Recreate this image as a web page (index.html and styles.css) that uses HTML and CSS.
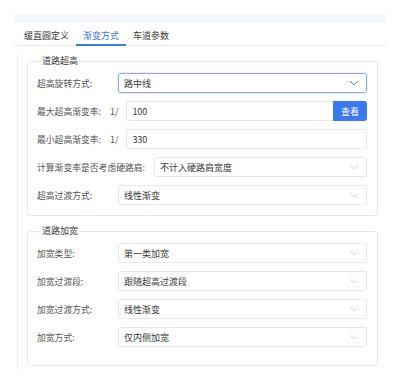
FILE: index.html
```html
<!DOCTYPE html>
<html lang="zh-CN">
<head>
    <meta charset="UTF-8">
    <title>渐变方式</title>
    <link rel="stylesheet" href="styles.css">
</head>
<body>
    <div class="page">
        <div class="topbar"></div>

        <!-- Tabs -->
        <div class="tabs">
            <div class="tab">缓直圆定义</div>
            <div class="tab active">渐变方式</div>
            <div class="tab">车道参数</div>
        </div>

        <div class="panel">
            <!-- 道路超高 -->
            <fieldset class="group">
                <legend>道路超高</legend>
                <div class="row">
                    <span class="label">超高旋转方式:</span>
                    <div class="select focused">
                        <span>路中线</span>
                        <svg class="arrow" viewBox="0 0 10 6" width="10" height="6"><polyline points="1,1 5,5 9,1"/></svg>
                    </div>
                </div>
                <div class="row">
                    <span class="label free">最大超高渐变率:</span>
                    <span class="prefix">1/</span>
                    <div class="input-group">
                        <div class="input joined">100</div>
                        <button class="btn">查看</button>
                    </div>
                </div>
                <div class="row">
                    <span class="label free">最小超高渐变率:</span>
                    <span class="prefix">1/</span>
                    <div class="input">330</div>
                </div>
                <div class="row">
                    <span class="label free">计算渐变率是否考虑硬路肩:</span>
                    <div class="select">
                        <span>不计入硬路肩宽度</span>
                        <svg class="arrow" viewBox="0 0 10 6" width="10" height="6"><polyline points="1,1 5,5 9,1"/></svg>
                    </div>
                </div>
                <div class="row">
                    <span class="label">超高过渡方式:</span>
                    <div class="select">
                        <span>线性渐变</span>
                        <svg class="arrow" viewBox="0 0 10 6" width="10" height="6"><polyline points="1,1 5,5 9,1"/></svg>
                    </div>
                </div>
            </fieldset>

            <!-- 道路加宽 -->
            <fieldset class="group last">
                <legend>道路加宽</legend>
                <div class="row">
                    <span class="label">加宽类型:</span>
                    <div class="select">
                        <span>第一类加宽</span>
                        <svg class="arrow" viewBox="0 0 10 6" width="10" height="6"><polyline points="1,1 5,5 9,1"/></svg>
                    </div>
                </div>
                <div class="row">
                    <span class="label">加宽过渡段:</span>
                    <div class="select">
                        <span>跟随超高过渡段</span>
                        <svg class="arrow" viewBox="0 0 10 6" width="10" height="6"><polyline points="1,1 5,5 9,1"/></svg>
                    </div>
                </div>
                <div class="row">
                    <span class="label">加宽过渡方式:</span>
                    <div class="select">
                        <span>线性渐变</span>
                        <svg class="arrow" viewBox="0 0 10 6" width="10" height="6"><polyline points="1,1 5,5 9,1"/></svg>
                    </div>
                </div>
                <div class="row">
                    <span class="label">加宽方式:</span>
                    <div class="select">
                        <span>仅内侧加宽</span>
                        <svg class="arrow" viewBox="0 0 10 6" width="10" height="6"><polyline points="1,1 5,5 9,1"/></svg>
                    </div>
                </div>
            </fieldset>
        </div>
    </div>
</body>
</html>
```

FILE: styles.css
```css
* {
    margin: 0;
    padding: 0;
    box-sizing: border-box;
}
:root {
    --primary: #3b78f2;
    --border: #e6e8ec;
    --text: #3a3a3a;
    --label: #555555;
}
body {
    font-family: "Noto Sans CJK SC", "Noto Sans", sans-serif;
    font-size: 9px;
    color: var(--text);
    background: #ffffff;
}
.page {
    width: 372px;
    margin-left: 14px;
    padding-top: 14px;
}
.topbar {
    height: 9px;
    background: #f3f6fa;
}
/* Tabs */
.tabs {
    display: flex;
    height: 23px;
    padding-left: 3px;
    border-bottom: 1px solid #eceef1;
}
.tab {
    height: 23px;
    padding: 6px 7px 0;
    line-height: 14px;
    border-bottom: 2px solid transparent;
    margin-bottom: -1px;
    color: var(--text);
}
.tab.active {
    color: var(--primary);
    border-bottom-color: var(--primary);
}
/* Panel */
.panel {
    margin-left: 3px;
    border-left: 1px solid #eeeeee;
    padding: 0 8px 3px 9px;
}
.group {
    margin-top: 8px;
    border: 1px solid var(--border);
    border-radius: 3px;
    padding: 5px 10px 10px 9px;
    display: flex;
    flex-direction: column;
    gap: 8px;
}
.group.last {
    padding-bottom: 18px;
}
.group legend {
    margin-left: 4px;
    padding: 0 1px;
    line-height: 14px;
    font-size: 9px;
    color: var(--text);
}
/* Rows */
.row {
    display: flex;
    align-items: center;
    gap: 9px;
    height: 20px;
}
.label {
    min-width: 72px;
    font-size: 8.8px;
    color: var(--label);
    white-space: nowrap;
}
.label.free {
    min-width: 0;
}
.prefix {
    font-size: 8.8px;
    color: var(--label);
    margin-right: -1px;
}
.select,
.input {
    flex: 1;
    height: 20px;
    display: flex;
    align-items: center;
    justify-content: space-between;
    padding: 0 7px 0 5px;
    border: 1px solid var(--border);
    border-radius: 3px;
    background: #ffffff;
    color: var(--text);
}
.select.focused {
    border-color: #8fabe6;
    box-shadow: 0 0 0 1px rgba(59, 120, 242, 0.12);
}
.arrow {
    fill: none;
    stroke: #d4d6da;
    stroke-width: 1;
}
.select.focused .arrow {
    stroke: #6f8fd4;
}
.input-group {
    flex: 1;
    display: flex;
    height: 20px;
}
.input.joined {
    border-radius: 3px 0 0 3px;
    border-right: none;
}
.btn {
    width: 34px;
    height: 20px;
    border: none;
    border-radius: 0 3px 3px 0;
    background: var(--primary);
    color: #ffffff;
    font-family: inherit;
    font-size: 9px;
}
```
